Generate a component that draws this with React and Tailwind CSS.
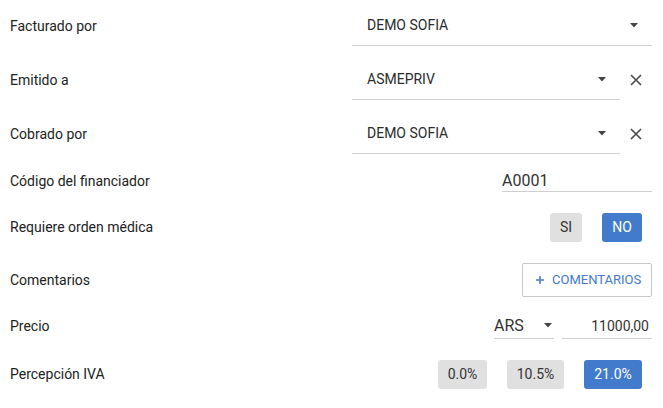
import React from 'react';

const Caret = () => (
    <svg width="8" height="5" viewBox="0 0 8 5" className="shrink-0">
        <path d="M0 0 L8 0 L4 4.5 Z" fill="#444" />
    </svg>
);

const Cross = () => (
    <svg width="12" height="12" viewBox="0 0 12 12">
        <path d="M1 1 L11 11 M11 1 L1 11" stroke="#4a4a4a" strokeWidth="1.6" />
    </svg>
);

function Select({ value, width }) {
    return (
        <div className={`${width} h-[39px] border-b border-[#cfcfcf] flex items-center justify-between pl-[15px] pr-[14px] text-[14px] text-[#2b2b2b]`}>
            <span>{value}</span>
            <Caret />
        </div>
    );
}

function Row({ label, h, children }) {
    return (
        <div className={`flex items-center justify-between ${h}`}>
            <span className="text-[14px] text-[#222]">{label}</span>
            <div className="flex items-center">{children}</div>
        </div>
    );
}

export default function App() {
    return (
        <div className="w-[663px] h-[408px] bg-white pl-[10px] pr-[11px] font-['Roboto',sans-serif]">
            <Row label="Facturado por" h="h-[52px]">
                <Select value="DEMO SOFIA" width="w-[300px]" />
            </Row>
            <Row label="Emitido a" h="h-[56px]">
                <Select value="ASMEPRIV" width="w-[268px]" />
                <div className="w-[32px] flex justify-center"><Cross /></div>
            </Row>
            <Row label="Cobrado por" h="h-[52px]">
                <Select value="DEMO SOFIA" width="w-[268px]" />
                <div className="w-[32px] flex justify-center"><Cross /></div>
            </Row>
            <Row label="Código del financiador" h="h-[42px]">
                <div className="w-[150px] h-[21px] border-b border-[#cfcfcf] text-[16px] leading-[20px] text-[#333]">A0001</div>
            </Row>
            <Row label="Requiere orden médica" h="h-[50px]">
                <div className="flex items-center gap-[20px] mr-[10px]">
                    <button className="w-[32px] h-[29px] rounded-[3px] bg-[#e0e0e0] text-[14px] text-[#333]">SI</button>
                    <button className="w-[40px] h-[29px] rounded-[3px] bg-[#427bcb] text-[14px] text-white">NO</button>
                </div>
            </Row>
            <Row label="Comentarios" h="h-[56px]">
                <button className="w-[130px] h-[34px] border border-[#c8c8c8] rounded-[2px] flex items-center pl-[13px] gap-[8px] text-[13px] text-[#427bcb]">
                    <svg width="8" height="8" viewBox="0 0 8 8">
                        <path d="M4 0 V8 M0 4 H8" stroke="#427bcb" strokeWidth="1.5" />
                    </svg>
                    COMENTARIOS
                </button>
            </Row>
            <Row label="Precio" h="h-[36px]">
                <div className="flex items-center gap-[8px]">
                    <div className="w-[60px] h-[25px] border-b border-[#cfcfcf] flex items-center justify-between pr-[2px] text-[16px] leading-[24px] text-[#333]">
                        <span>ARS</span>
                        <Caret />
                    </div>
                    <div className="w-[90px] h-[25px] border-b border-[#cfcfcf] text-right pr-[3px] text-[14px] leading-[24px] text-[#333]">11000,00</div>
                </div>
            </Row>
            <Row label="Percepción IVA" h="h-[60px]">
                <div className="flex items-center gap-[20px] mr-[10px]">
                    <button className="w-[49px] h-[29px] rounded-[3px] bg-[#e0e0e0] text-[14px] text-[#333]">0.0%</button>
                    <button className="w-[57px] h-[29px] rounded-[3px] bg-[#e0e0e0] text-[14px] text-[#333]">10.5%</button>
                    <button className="w-[58px] h-[29px] rounded-[3px] bg-[#427bcb] text-[14px] text-white">21.0%</button>
                </div>
            </Row>
        </div>
    );
}
